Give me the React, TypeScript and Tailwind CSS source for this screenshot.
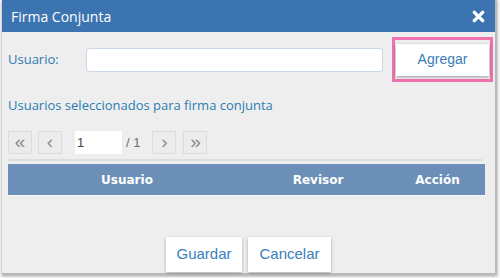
import React from "react";

const PagerButton = ({ label }: { label: string }) => (
  <button className="flex h-[23px] w-[24px] items-center justify-center border border-[#dcdcdc] bg-[#ececec] pb-[2px] text-[19px] leading-none text-[#8a8a8a]">
    {label}
  </button>
);

const App = () => {
  return (
    <div className="h-[278px] w-[500px] overflow-hidden bg-[#f7f7f7] font-['Open_Sans',sans-serif]">
      <div className="ml-[2px] flex h-[275px] w-[495px] flex-col border-r-2 border-b-2 border-[#b9b9b9] bg-[#eeeeee] shadow-[0_1px_3px_rgba(0,0,0,0.35)]">
        {/* title bar */}
        <div className="flex h-[32px] shrink-0 items-center justify-between bg-[#3b74b0] pl-[9px] pr-[10px]">
          <span className="text-[14px] text-white">Firma Conjunta</span>
          <svg width="13" height="13" viewBox="0 0 14 14">
            <path d="M2.5 2.5 L11.5 11.5 M11.5 2.5 L2.5 11.5" stroke="white" strokeWidth="3.6" strokeLinecap="round" />
          </svg>
        </div>

        {/* usuario row */}
        <div className="mt-[5px] flex h-[45px] items-center">
          <span className="ml-[6px] w-[78px] text-[13px] text-[#2f7ab2]">Usuario:</span>
          <input className="h-[24px] w-[297px] rounded-[3px] border border-[#c9d6e3] bg-white px-1 text-[13px] outline-none" />
          <div className="ml-[9px] flex h-[45px] w-[101px] items-center justify-center border-[3px] border-[#ee72ad]">
            <button className="h-[32px] w-[93px] bg-white font-['Liberation_Sans',sans-serif] text-[14px] text-[#3b7cb6] shadow-[0_1px_3px_rgba(0,0,0,0.35)]">
              Agregar
            </button>
          </div>
        </div>

        <div className="ml-[6px] mt-[14px] text-[13px] leading-[18px] text-[#2b7db3]">
          Usuarios seleccionados para firma conjunta
        </div>

        {/* pager */}
        <div className="ml-[6px] mt-[17px] flex h-[23px] items-center font-['Liberation_Sans',sans-serif]">
          <PagerButton label="«" />
          <div className="ml-[6px]">
            <PagerButton label="‹" />
          </div>
          <div className="ml-[13px] flex h-[23px] w-[47px] items-center bg-white pl-[2px] text-[13px] text-[#444]">1</div>
          <span className="ml-[4px] text-[13px] text-[#6f6f6f]">/ 1</span>
          <div className="ml-[12px]">
            <PagerButton label="›" />
          </div>
          <div className="ml-[7px]">
            <PagerButton label="»" />
          </div>
        </div>

        <div className="ml-[6px] mt-[5px] h-[2px] w-[474px] bg-[#dedede]" />

        {/* table header */}
        <div className="ml-[6px] mt-[3px] flex h-[31px] w-[477px] items-center bg-[#6b8fb6] font-['DejaVu_Sans',sans-serif] text-[12px] font-bold text-white">
          <div className="w-[238px] text-center">Usuario</div>
          <div className="w-[144px] text-center">Revisor</div>
          <div className="w-[95px] text-center">Acción</div>
        </div>
        <div className="ml-[6px] h-[1px] w-[477px] bg-[#f8f8f8]" />

        {/* footer */}
        <div className="mt-auto mb-[1px] flex justify-center gap-[6px] font-['Liberation_Sans',sans-serif]">
          <button className="h-[35px] w-[76px] bg-white text-[15px] text-[#3a80ba] shadow-[0_1px_3px_rgba(0,0,0,0.3)]">
            Guardar
          </button>
          <button className="h-[35px] w-[83px] bg-white text-[15px] text-[#3a80ba] shadow-[0_1px_3px_rgba(0,0,0,0.3)]">
            Cancelar
          </button>
        </div>
      </div>
    </div>
  );
};

export default App;
